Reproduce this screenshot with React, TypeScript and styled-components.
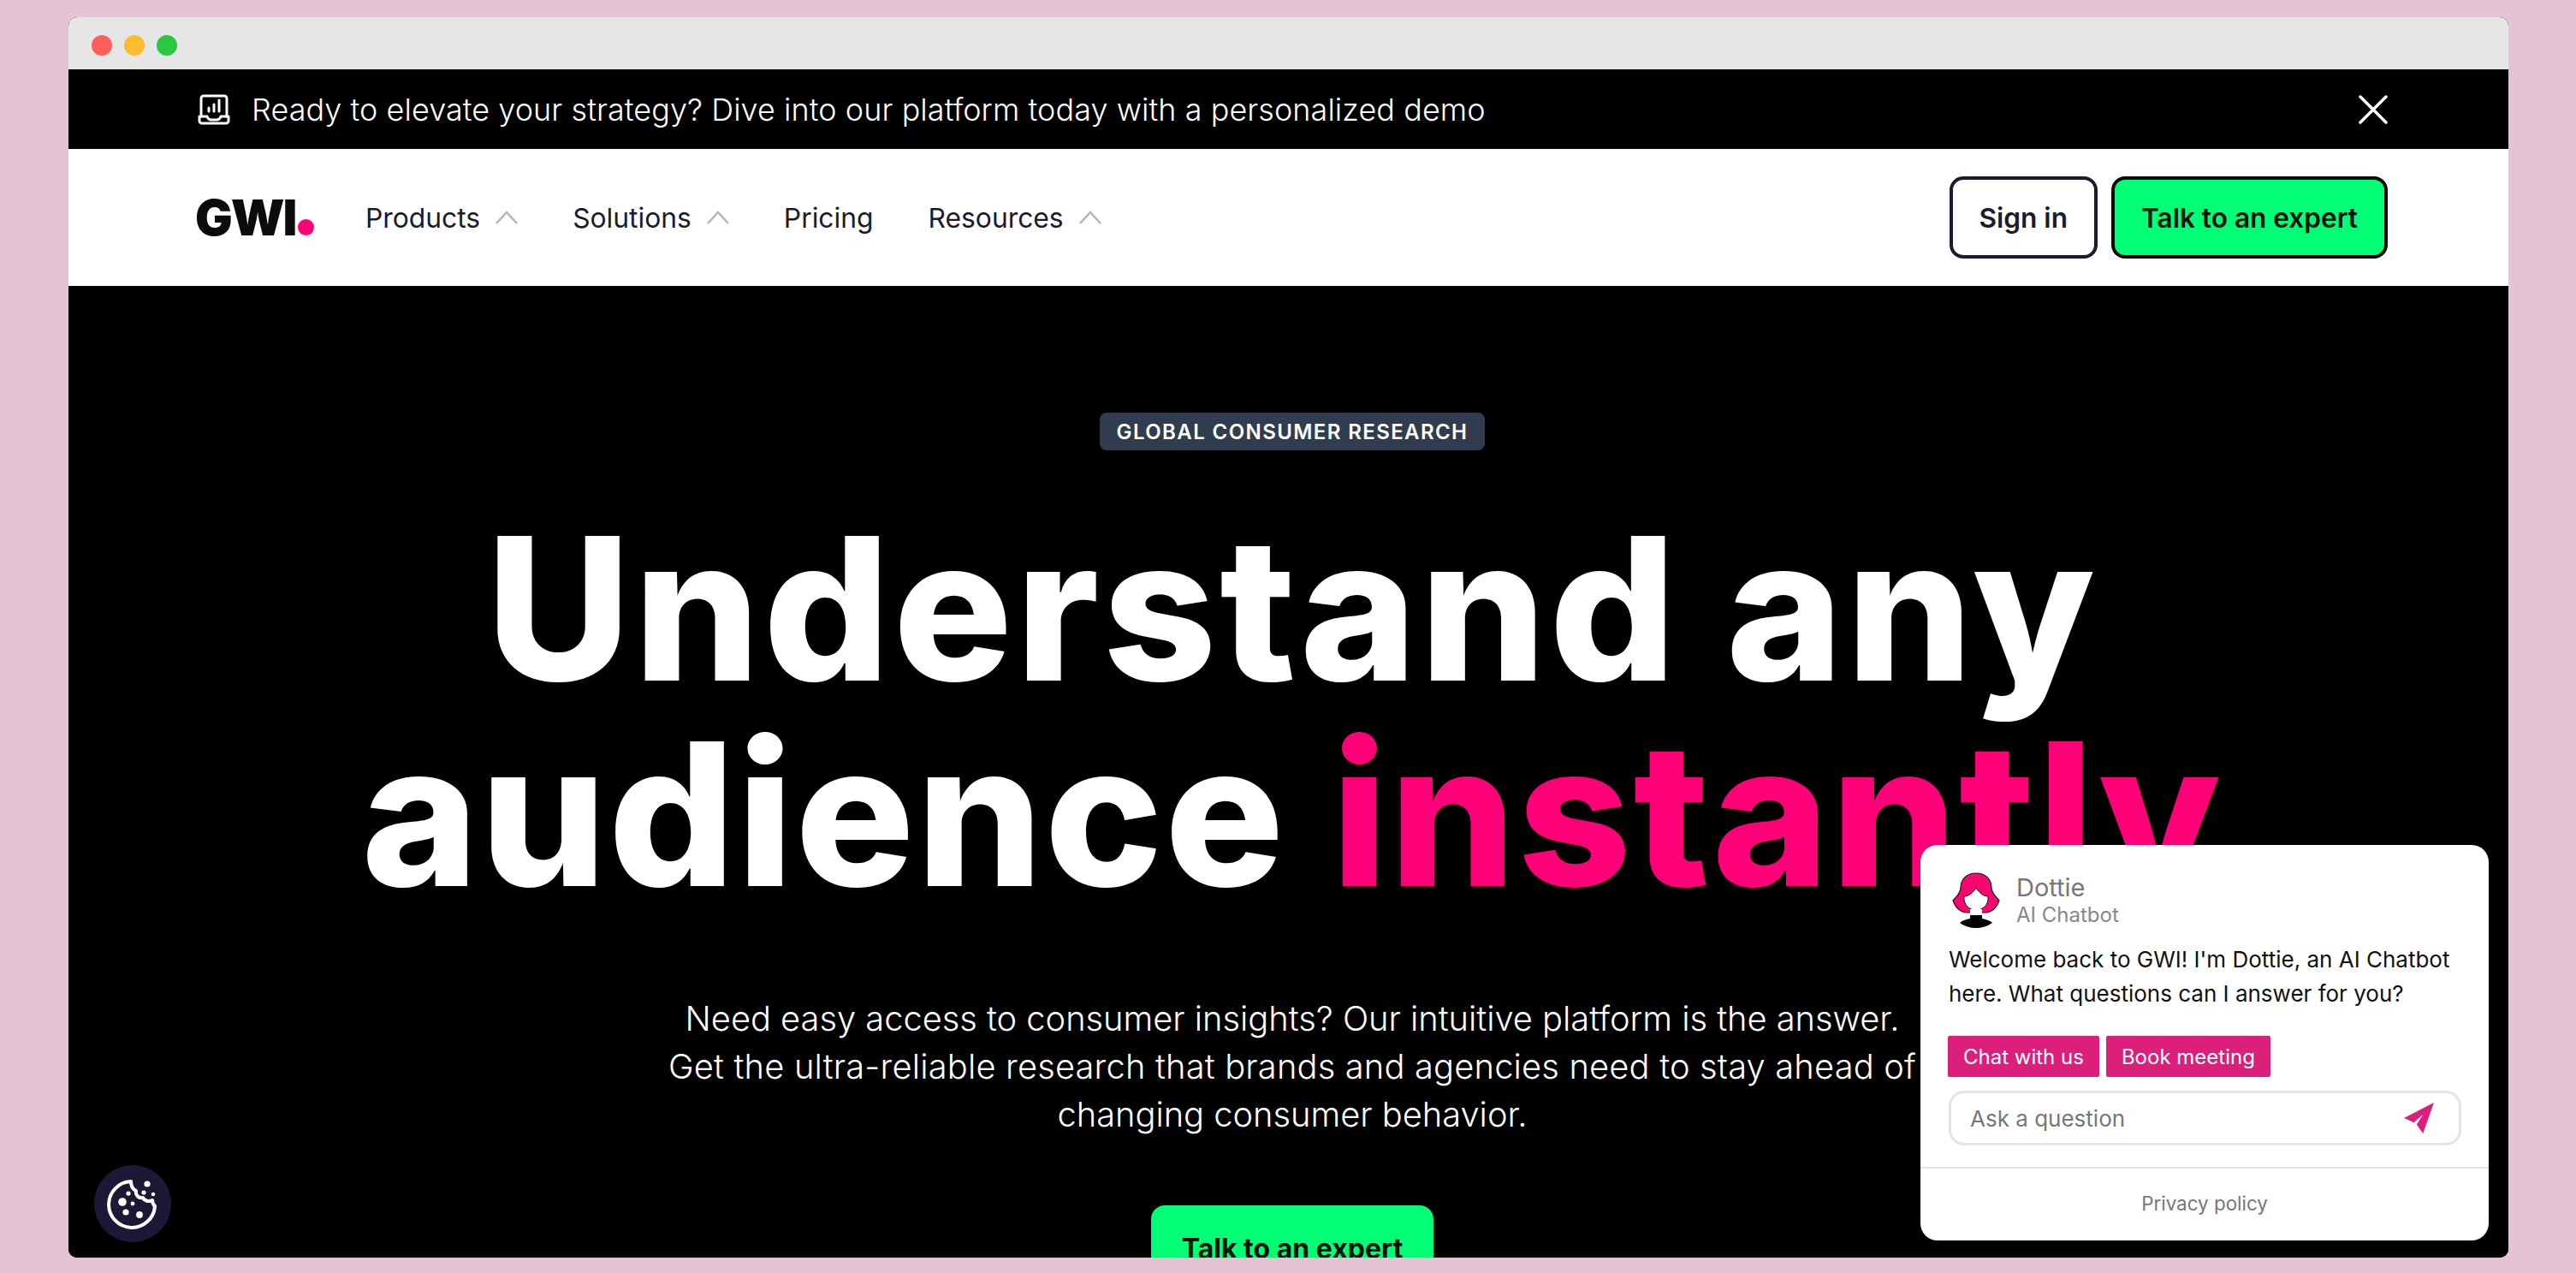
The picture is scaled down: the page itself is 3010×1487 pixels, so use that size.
import styled, { createGlobalStyle } from 'styled-components';

const GlobalStyle = createGlobalStyle`
  html, body {
    margin: 0;
    padding: 0;
    height: 1487px;
    overflow: hidden;
    background: #e5c3d5;
  }
  * {
    box-sizing: border-box;
  }
`;

const Window = styled.div`
  position: relative;
  width: 2851px;
  height: 1449px;
  margin: 20px 0 0 80px;
  border-radius: 10px;
  overflow: hidden;
  display: flex;
  flex-direction: column;
  background: #000;
  font-family: 'Inter', 'Liberation Sans', sans-serif;
`;

const TitleBar = styled.div`
  flex: none;
  height: 61px;
  padding: 4px 0 0 27px;
  display: flex;
  align-items: center;
  gap: 14px;
  background: #e6e6e6;
`;

const Light = styled.span<{ $color: string }>`
  width: 24px;
  height: 24px;
  border-radius: 50%;
  background: ${({ $color }) => $color};
`;

const Banner = styled.div`
  flex: none;
  height: 93px;
  padding: 0 141px 0 151px;
  display: flex;
  align-items: center;
  color: #fff;
  background: #000;
`;

const BannerText = styled.span`
  flex: 1;
  margin-left: 25px;
  font-size: 35.9px;
  font-weight: 300;
  letter-spacing: 0.1px;
`;

const Nav = styled.nav`
  flex: none;
  height: 160px;
  padding: 0 141px 0 148px;
  display: flex;
  align-items: center;
  background: #fff;
`;

const Logo = styled.div`
  display: flex;
  align-items: flex-end;
  width: 199px;
  font-size: 58px;
  font-weight: 900;
  line-height: 42px;
  letter-spacing: -2px;
  color: #0b0b0d;
`;

const LogoDot = styled.span`
  width: 19px;
  height: 19px;
  margin-left: 3px;
  border-radius: 50%;
  background: #ff0078;
`;

const NavLinks = styled.div`
  flex: 1;
  display: flex;
  align-items: center;
  gap: 64px;
`;

const NavLink = styled.a`
  display: flex;
  align-items: center;
  gap: 18px;
  font-size: 31.8px;
  font-weight: 400;
  color: #1c1b2e;
`;

const NavActions = styled.div`
  display: flex;
  gap: 16px;
`;

const NavButton = styled.a<{ $primary?: boolean }>`
  height: 96px;
  padding: 0 31px;
  display: flex;
  align-items: center;
  border: 4px solid ${({ $primary }) => ($primary ? '#050a08' : '#1c1b2e')};
  border-radius: 16px;
  font-size: 31.6px;
  font-weight: 600;
  color: ${({ $primary }) => ($primary ? '#04130b' : '#1c1b2e')};
  background: ${({ $primary }) => ($primary ? '#00ff75' : '#fff')};
`;

const Hero = styled.main`
  flex: 1;
  min-height: 0;
  padding: 148px 0 0 9px;
  display: flex;
  flex-direction: column;
  align-items: center;
  color: #fff;
  background: #000;
`;

const Badge = styled.span`
  flex: none;
  height: 44px;
  padding: 0 20px;
  display: flex;
  align-items: center;
  border-radius: 8px;
  font-size: 24px;
  font-weight: 600;
  letter-spacing: 1.4px;
  white-space: nowrap;
  background: #2f3d4f;
`;

const Headline = styled.h1`
  flex: none;
  margin: 65px 0 0;
  font-size: 232px;
  font-weight: 800;
  line-height: 240px;
  text-align: center;
  white-space: nowrap;
`;

const HeadlineLine = styled.span<{ $tracking: number }>`
  display: block;
  letter-spacing: ${({ $tracking }) => $tracking}px;
`;

const Accent = styled.span`
  color: #ff0078;
`;

const Lead = styled.p`
  flex: none;
  margin: 91px 0 0;
  font-size: 39.8px;
  font-weight: 300;
  line-height: 56px;
  text-align: center;
  white-space: nowrap;
`;

const LeadWide = styled.span`
  letter-spacing: 0.2px;
`;

const Cta = styled.a`
  flex: none;
  width: 330px;
  height: 100px;
  margin-top: 78px;
  display: flex;
  align-items: center;
  justify-content: center;
  border-radius: 16px;
  font-size: 32px;
  font-weight: 700;
  color: #04130b;
  background: #00ff75;
`;

const CookieButton = styled.button`
  position: absolute;
  left: 30px;
  bottom: 18px;
  width: 90px;
  height: 90px;
  padding: 0;
  display: flex;
  border: none;
  border-radius: 50%;
  background: #1d1836;
`;

const ChatPanel = styled.aside`
  position: absolute;
  top: 967px;
  left: 2164px;
  width: 664px;
  height: 462px;
  padding-top: 32px;
  display: flex;
  flex-direction: column;
  border-radius: 20px;
  background: #fff;
`;

const ChatHeader = styled.header`
  padding: 0 33px 0 36px;
  display: flex;
  align-items: center;
  gap: 18px;
`;

const ChatIdentity = styled.div`
  display: flex;
  flex-direction: column;
`;

const ChatName = styled.span`
  font-size: 29px;
  line-height: 34px;
  color: #777;
`;

const ChatRole = styled.span`
  font-size: 24px;
  line-height: 30px;
  color: #888;
`;

const ChatMessage = styled.p`
  margin: 16px 0 0;
  padding: 0 33px;
  font-size: 26px;
  line-height: 39.5px;
  color: #111;
`;

const ChatActions = styled.div`
  margin-top: 30px;
  padding: 0 32px;
  display: flex;
  gap: 8px;
`;

const ChatAction = styled.a`
  height: 48px;
  padding: 0 18px;
  display: flex;
  align-items: center;
  border-radius: 2px;
  font-size: 24px;
  color: #fff;
  background: #dc1f7b;
`;

const ChatInput = styled.div`
  height: 64px;
  margin: 16px 32px 0 33px;
  padding: 0 28px 0 22px;
  display: flex;
  align-items: center;
  justify-content: space-between;
  border: 3px solid #e4e4e4;
  border-radius: 18px;
  font-size: 26px;
  color: #777;
`;

const ChatFooter = styled.footer`
  flex: 1;
  margin-top: 25px;
  padding-top: 26px;
  border-top: 2px solid #e3e3e3;
  font-size: 22.4px;
  line-height: 30px;
  text-align: center;
  color: #777;
`;

const LaptopIcon = () => (
  <svg width="38" height="36" viewBox="0 0 38 36" fill="none" stroke="#fff" strokeWidth="3" strokeLinecap="round" strokeLinejoin="round">
    <path d="M4 26V5a3 3 0 0 1 3-3h24a3 3 0 0 1 3 3v21" />
    <path d="M2 26h9c1 3 3 4 5 4h6c2 0 4-1 5-4h9v5a3 3 0 0 1-3 3H5a3 3 0 0 1-3-3z" />
    <path d="M13 20v-4M19 20V12M25 20V7" />
  </svg>
);

const CloseIcon = () => (
  <svg width="34" height="34" viewBox="0 0 34 34" stroke="#fff" strokeWidth="3.5" strokeLinecap="round">
    <path d="M2 2l30 30M32 2L2 32" />
  </svg>
);

const Chevron = () => (
  <svg width="26" height="16" viewBox="0 0 26 16" fill="none" stroke="#b3b6ba" strokeWidth="2.5">
    <path d="M1 15L13 2l12 13" />
  </svg>
);

const CookieIcon = () => (
  <svg width="90" height="90" viewBox="0 1 90 90" fill="#fff">
    <path
      d="M43 20A27 27 0 1 0 71 49C69 47 68 44 68 42C64 44 59 43 57 39C52 40 48 36 49 31C45 29 43 25 43 20Z"
      fill="none"
      stroke="#fff"
      strokeWidth="4"
      strokeLinejoin="round"
    />
    <circle cx="33" cy="44" r="4.8" />
    <circle cx="40" cy="34" r="2.6" />
    <circle cx="45" cy="46" r="2.4" />
    <circle cx="37" cy="56" r="3.6" />
    <circle cx="53" cy="59" r="3.9" />
    <circle cx="62" cy="23" r="3.6" />
    <circle cx="58" cy="33" r="2.6" />
    <circle cx="69" cy="35" r="2.3" />
  </svg>
);

const DottieAvatar = () => (
  <svg width="58" height="66" viewBox="0 0 58 66">
    <path
      d="M29 1C17 1 11 9 11 18C11 24 7 27 2 33C5 41 11 47 19 47H39C47 47 53 41 56 33C51 27 47 24 47 18C47 9 41 1 29 1Z"
      fill="#f5086f"
      stroke="#1a1020"
      strokeWidth="1.2"
    />
    <path d="M15 28C21 28 26 23 29 18C32 23 37 28 43 28C44 38 37 44 29 44C21 44 14 38 15 28Z" fill="#fff" stroke="#1a1020" strokeWidth="1" />
    <path d="M22 43H36V53H22Z" fill="#fff" />
    <path d="M22 50H36V54C42 55 46 57 48 59C42 63 36 65 29 65C22 65 16 63 10 59C12 57 16 55 22 54Z" fill="#000" />
  </svg>
);

const SendIcon = () => (
  <svg width="36" height="36" viewBox="0 0 34 34" fill="#dc1f7b">
    <path d="M33 0L0 17L11 22L21 13L14 24L21 34Z" />
  </svg>
);

const navItems = [
  { label: 'Products', menu: true },
  { label: 'Solutions', menu: true },
  { label: 'Pricing', menu: false },
  { label: 'Resources', menu: true },
];

export default function App() {
  return (
    <>
      <GlobalStyle />
      <Window>
        <TitleBar>
          <Light $color="#ff5f57" />
          <Light $color="#febc2e" />
          <Light $color="#28c840" />
        </TitleBar>
        <Banner>
          <LaptopIcon />
          <BannerText>Ready to elevate your strategy? Dive into our platform today with a personalized demo</BannerText>
          <CloseIcon />
        </Banner>
        <Nav>
          <Logo>
            GWI
            <LogoDot />
          </Logo>
          <NavLinks>
            {navItems.map((item) => (
              <NavLink key={item.label}>
                {item.label}
                {item.menu && <Chevron />}
              </NavLink>
            ))}
          </NavLinks>
          <NavActions>
            <NavButton>Sign in</NavButton>
            <NavButton $primary>Talk to an expert</NavButton>
          </NavActions>
        </Nav>
        <Hero>
          <Badge>GLOBAL CONSUMER RESEARCH</Badge>
          <Headline>
            <HeadlineLine $tracking={3.9}>Understand any</HeadlineLine>
            <HeadlineLine $tracking={2.3}>
              audience <Accent>instantly</Accent>
            </HeadlineLine>
          </Headline>
          <Lead>
            Need easy access to consumer insights? Our intuitive platform is the answer.
            <br />
            <LeadWide>Get the ultra-reliable research that brands and agencies need to stay ahead of</LeadWide>
            <br />
            changing consumer behavior.
          </Lead>
          <Cta>Talk to an expert</Cta>
        </Hero>
        <CookieButton aria-label="Cookie settings">
          <CookieIcon />
        </CookieButton>
        <ChatPanel>
          <ChatHeader>
            <DottieAvatar />
            <ChatIdentity>
              <ChatName>Dottie</ChatName>
              <ChatRole>AI Chatbot</ChatRole>
            </ChatIdentity>
          </ChatHeader>
          <ChatMessage>
            Welcome back to GWI! I'm Dottie, an AI Chatbot
            <br />
            here. What questions can I answer for you?
          </ChatMessage>
          <ChatActions>
            <ChatAction>Chat with us</ChatAction>
            <ChatAction>Book meeting</ChatAction>
          </ChatActions>
          <ChatInput>
            Ask a question
            <SendIcon />
          </ChatInput>
          <ChatFooter>Privacy policy</ChatFooter>
        </ChatPanel>
      </Window>
    </>
  );
}
